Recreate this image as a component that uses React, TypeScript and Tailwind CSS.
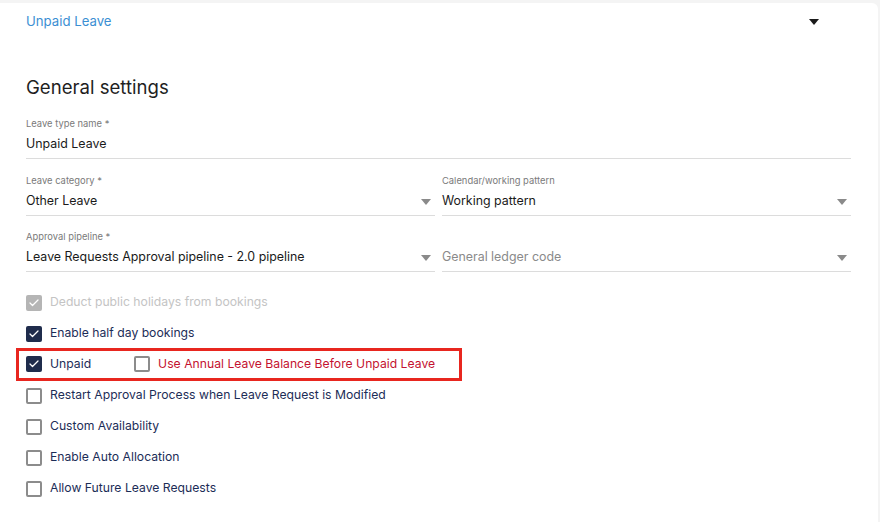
import { Check } from "lucide-react";

function Caret({ className = "" }: { className?: string }) {
  return (
    <svg width="10" height="6" viewBox="0 0 10 6" className={className}>
      <path d="M0 0h10L5 6z" fill="currentColor" />
    </svg>
  );
}

function SelectField({
  label,
  value,
  placeholder,
}: {
  label?: string;
  value?: string;
  placeholder?: string;
}) {
  return (
    <div className="flex flex-col">
      <div className="h-[16px] text-[9.4px] leading-[16px] text-[#7a7a7a]">{label}</div>
      <div className="flex h-[27px] items-center justify-between border-b border-[#dcdcdc] pb-[1px]">
        {value ? (
          <span className="text-[12.4px] text-[#1a1a1a]">{value}</span>
        ) : (
          <span className="text-[12.4px] text-[#8a8a8a]">{placeholder}</span>
        )}
        <Caret className="mr-[4px] text-[#8a8a8a]" />
      </div>
    </div>
  );
}

function Box({ checked, disabled }: { checked?: boolean; disabled?: boolean }) {
  if (checked) {
    return (
      <span
        className={`flex h-[16px] w-[16px] shrink-0 items-center justify-center rounded-[2px] ${
          disabled ? "bg-[#b5b5b5]" : "bg-[#1f2c4c]"
        }`}
      >
        <Check size={12} strokeWidth={2.5} className="text-white" />
      </span>
    );
  }
  return <span className="h-[16px] w-[16px] shrink-0 rounded-[2px] border-2 border-[#8c8c8c]" />;
}

function CheckRow({
  label,
  checked,
  disabled,
}: {
  label: string;
  checked?: boolean;
  disabled?: boolean;
}) {
  return (
    <div className="flex h-[31px] items-center gap-[8px]">
      <Box checked={checked} disabled={disabled} />
      <span
        className={`whitespace-nowrap text-[12.2px] ${disabled ? "text-[#c4c4c4]" : "text-[#1c2d57]"}`}
      >
        {label}
      </span>
    </div>
  );
}

export default function App() {
  return (
    <div
      className="min-h-[522px] bg-[#f4f4f4] pt-[3px] pr-[2px]"
      style={{ fontFamily: "Inter, 'Noto Sans', sans-serif" }}
    >
      <div className="h-[519px] rounded-tr-[6px] bg-white px-[26px]">
        <div className="flex h-[38px] items-center justify-between pr-[33px]">
          <span className="text-[13.2px] text-[#3b8fd3]">Unpaid Leave</span>
          <Caret className="text-[#1a1a1a]" />
        </div>

        <h2 className="mt-[32px] text-[18.6px] leading-[28px] text-[#1f1f1f]">General settings</h2>

        <div className="mt-[15px] flex w-[825px] flex-col gap-[14px]">
          <div className="flex flex-col">
            <div className="h-[16px] text-[9.4px] leading-[16px] text-[#7a7a7a]">Leave type name *</div>
            <div className="flex h-[27px] items-center border-b border-[#dcdcdc] pb-[1px]">
              <span className="text-[12.4px] text-[#1a1a1a]">Unpaid Leave</span>
            </div>
          </div>
          <div className="grid grid-cols-[409px_409px] gap-x-[7px] gap-y-[13px]">
            <SelectField label="Leave category *" value="Other Leave" />
            <SelectField label="Calendar/working pattern" value="Working pattern" />
            <SelectField label="Approval pipeline *" value="Leave Requests Approval pipeline - 2.0 pipeline" />
            <SelectField placeholder="General ledger code" />
          </div>
        </div>

        <div className="mt-[15px] flex flex-col">
          <CheckRow label="Deduct public holidays from bookings" checked disabled />
          <CheckRow label="Enable half day bookings" checked />
          <div className="-mx-[10px] -my-[1px] flex h-[33px] w-[446px] items-center border-[3px] border-[#e8261f] px-[7px]">
            <div className="flex items-center gap-[8px]">
              <Box checked />
              <span className="text-[12.2px] text-[#1c2d57]">Unpaid</span>
            </div>
            <div className="ml-[43px] flex items-center gap-[8px]">
              <Box />
              <span className="whitespace-nowrap text-[12.2px] text-[#c41230]">
                Use Annual Leave Balance Before Unpaid Leave
              </span>
            </div>
          </div>
          <CheckRow label="Restart Approval Process when Leave Request is Modified" />
          <CheckRow label="Custom Availability" />
          <CheckRow label="Enable Auto Allocation" />
          <CheckRow label="Allow Future Leave Requests" />
        </div>
      </div>
    </div>
  );
}
